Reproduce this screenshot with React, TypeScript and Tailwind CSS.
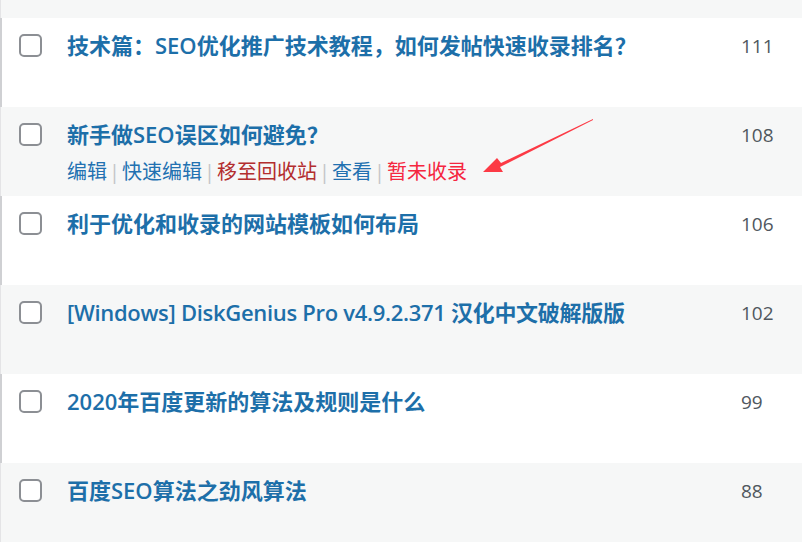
import React from "react";

type Row = { title: string; count: string; actions?: boolean; tight?: boolean };

const rows: Row[] = [
  { title: "技术篇：SEO优化推广技术教程，如何发帖快速收录排名？", count: "111" },
  { title: "新手做SEO误区如何避免？", count: "108", actions: true },
  { title: "利于优化和收录的网站模板如何布局", count: "106" },
  { title: "[Windows] DiskGenius Pro v4.9.2.371 汉化中文破解版版", count: "102", tight: true },
  { title: "2020年百度更新的算法及规则是什么", count: "99" },
  { title: "百度SEO算法之劲风算法", count: "88" },
];

const font = { fontFamily: '"Open Sans", "Noto Sans CJK SC", sans-serif' };

function Sep() {
  return <span className="text-[#c3c4c7] px-[2px]">|</span>;
}

export default function App() {
  return (
    <div className="w-[802px] h-[542px] overflow-hidden bg-white relative" style={font}>
      <div className="h-[18px] bg-[#f6f7f7] border-l border-[#e4e4e6]" />
      {rows.map((r, i) => {
        const odd = i % 2 === 1;
        return (
          <div
            key={i}
            className={
              "relative grid h-[89px] " +
              (odd
                ? "grid-cols-[66px_1fr_61px] bg-[#f6f7f7] border-l border-[#e4e4e6]"
                : "grid-cols-[65px_1fr_61px] bg-white border-l-2 border-[#cfd0d3]")
            }
          >
            <div className={odd ? "pt-[16px] pl-[18px]" : "pt-[16px] pl-[17px]"}>
              <div className="w-[23px] h-[23px] border-2 border-[#8c8f94] rounded-[5px] bg-white" />
            </div>
            <div className="pt-[12px]">
              <div
                className={
                  "text-[22px] leading-[30px] font-semibold text-[#1d6fa9] whitespace-nowrap " +
                  (r.tight ? "tracking-[-0.3px]" : "")
                }
              >
                {r.title}
              </div>
              {r.actions && (
                <div className="mt-[9px] text-[20px] leading-[28px] whitespace-nowrap">
                  <span className="text-[#2271b1]">编辑</span>
                  <Sep />
                  <span className="text-[#2271b1]">快速编辑</span>
                  <Sep />
                  <span className="text-[#b32d2e]">移至回收站</span>
                  <Sep />
                  <span className="text-[#2271b1]">查看</span>
                  <Sep />
                  <span className="text-[#f5263f]">暂未收录</span>
                </div>
              )}
            </div>
            <div className="pt-[14px] text-[19px] leading-[28px] text-[#50575e]">{r.count}</div>
            {r.actions && (
              <svg
                className="absolute left-0 top-0 pointer-events-none"
                width="802"
                height="89"
                viewBox="0 0 802 89"
              >
                <polygon
                  points="592,12 500,56 496,51 482,65 502,65 499,60 592,13"
                  fill="#fc3a45"
                />
              </svg>
            )}
          </div>
        );
      })}
    </div>
  );
}
